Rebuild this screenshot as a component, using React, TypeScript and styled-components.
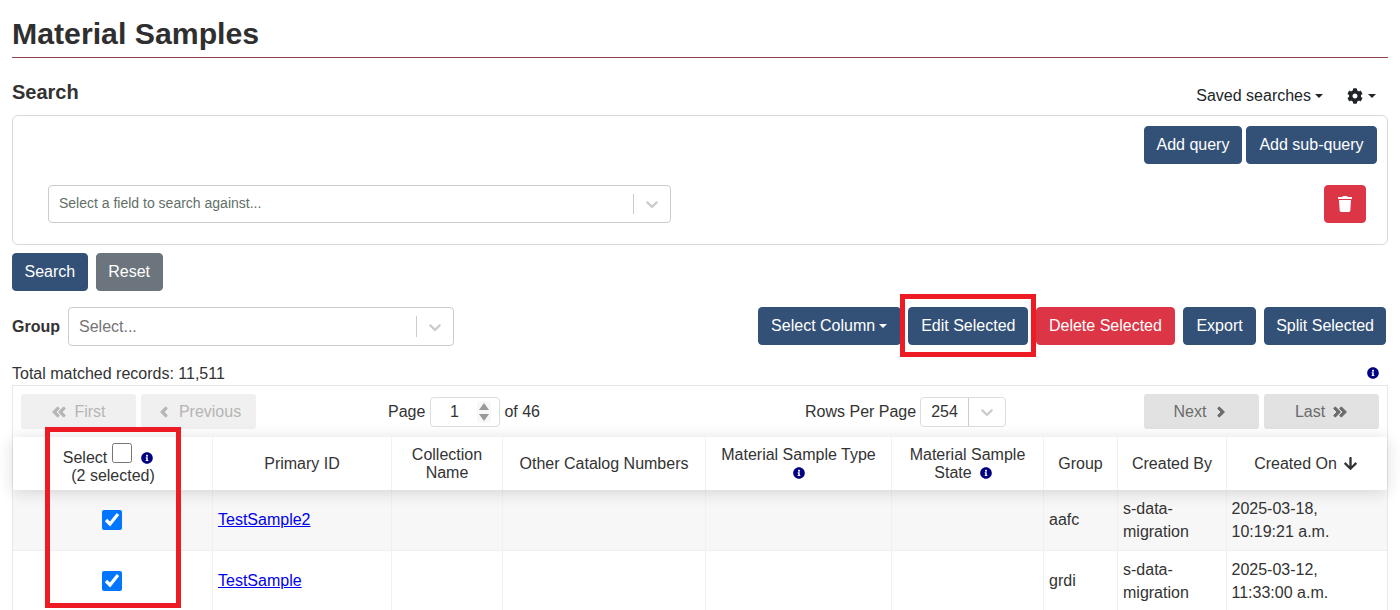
import React from "react";

import styled, { createGlobalStyle } from "styled-components";
import {
  FaAngleDoubleLeft,
  FaAngleDoubleRight,
  FaAngleLeft,
  FaAngleRight,
  FaArrowDown,
  FaCog,
  FaInfoCircle,
  FaTrash,
} from "react-icons/fa";

const COLUMNS = "200px 179px 111px 203px 186px 152px 74px 109px 160px";

const GlobalStyle = createGlobalStyle`
  html, body {
    margin: 0;
    height: 610px;
    overflow: hidden;
    background: #fff;
  }
  body {
    font-family: "Liberation Sans", Arial, sans-serif;
    font-size: 16px;
    color: #333;
  }
`;

const Page = styled.div`
  position: relative;
  height: 610px;
  padding: 0 12px;
  box-sizing: border-box;
  overflow: hidden;
`;

const Title = styled.h1`
  margin: 0;
  padding: 16px 0 5px;
  font-size: 30.25px;
  line-height: 36px;
  font-weight: 700;
  color: #2f2f2f;
  border-bottom: 1px solid #8e4450;
`;

const SearchHead = styled.div`
  display: flex;
  justify-content: space-between;
  height: 35px;
  margin-top: 22px;
`;

const SearchTitle = styled.h2`
  margin: 0;
  font-size: 20px;
  line-height: 24px;
  font-weight: 700;
`;

const HeadMenus = styled.div`
  display: flex;
  align-items: center;
  height: 32px;
  padding-right: 12px;
  color: #212529;
`;

const MenuItem = styled.span<{ $gap?: number }>`
  display: inline-flex;
  align-items: center;
  margin-left: ${(p) => p.$gap ?? 0}px;
`;

const Caret = styled.span<{ $left?: number }>`
  display: inline-block;
  margin-left: ${(p) => p.$left ?? 4}px;
  border-top: 4.8px solid currentColor;
  border-left: 4.8px solid transparent;
  border-right: 4.8px solid transparent;
`;

const SearchPanel = styled.div`
  box-sizing: border-box;
  height: 130px;
  padding: 10px 10px 0 35px;
  border: 1px solid #d8d8d8;
  border-radius: 6px;
`;

const PanelActions = styled.div`
  display: flex;
  justify-content: flex-end;
  gap: 4px;
`;

const QueryRow = styled.div`
  display: flex;
  justify-content: space-between;
  margin-top: 21px;
  padding-right: 11px;
`;

const Button = styled.button<{
  $variant?: "primary" | "danger" | "secondary";
  $pad?: number;
}>`
  box-sizing: border-box;
  height: 38px;
  padding: 0 ${(p) => p.$pad ?? 12}px;
  border: 1px solid
    ${(p) =>
      p.$variant === "danger"
        ? "#dc3545"
        : p.$variant === "secondary"
          ? "#6c757d"
          : "#335177"};
  border-radius: 4px;
  background: ${(p) =>
    p.$variant === "danger"
      ? "#dc3545"
      : p.$variant === "secondary"
        ? "#6c757d"
        : "#335177"};
  color: #fff;
  font: 16px/24px "Liberation Sans", Arial, sans-serif;
  display: inline-flex;
  align-items: center;
  white-space: nowrap;
`;

const SpacedButton = styled(Button)`
  margin-left: 1px;
`;

const TrashButton = styled(Button)`
  width: 42px;
  justify-content: center;
  padding: 0;
  font-size: 16px;
`;

const SelectBox = styled.div<{ $width: number; $height: number }>`
  box-sizing: border-box;
  display: flex;
  align-items: center;
  width: ${(p) => p.$width}px;
  height: ${(p) => p.$height}px;
  border: 1px solid #ccc;
  border-radius: 4px;
  background: #fff;
`;

const SelectText = styled.span<{ $size: number; $color: string; $lift?: number }>`
  flex: 1;
  padding: 0 0 ${(p) => p.$lift ?? 0}px 10px;
  font-size: ${(p) => p.$size}px;
  color: ${(p) => p.$color};
`;

const SelectArrow = styled.span<{ $inset: number }>`
  display: flex;
  align-items: center;
  align-self: stretch;
  margin: ${(p) => p.$inset}px 0;
  padding: 0 8px;
  border-left: 1px solid #ccc;
  color: #ccc;
`;

const SearchActions = styled.div`
  display: flex;
  gap: 8px;
  margin-top: 8px;
`;

const ToolRow = styled.div`
  display: flex;
  margin-top: 16px;
  height: 39px;
`;

const GroupLabel = styled.label`
  align-self: center;
  width: 56px;
  font-weight: 700;
`;

const ToolButtons = styled.div`
  display: flex;
  gap: 7.5px;
  margin-left: auto;
  padding-right: 2px;
`;

const TotalRow = styled.div`
  display: flex;
  justify-content: space-between;
  align-items: center;
  box-sizing: border-box;
  height: 24px;
  margin-top: 15px;
  padding-right: 9px;
  color: #333;
`;

const TotalText = styled.span`
  padding-top: 2px;
`;

const InfoIcon = styled(FaInfoCircle)`
  color: #000080;
  font-size: 12px;
  flex: none;
`;

const TableBox = styled.div`
  border: 1px solid #e8e8e8;
`;

const Pagination = styled.div`
  display: grid;
  grid-template-columns: 367px 417px 339px 235px;
  align-items: center;
  padding: 8px 0 8px 8px;
`;

const PagerGroup = styled.div`
  display: flex;
  gap: 5px;
`;

const PagerButton = styled.div<{ $dim?: boolean }>`
  display: flex;
  align-items: center;
  justify-content: center;
  gap: 7px;
  width: 115px;
  height: 35px;
  border-radius: 3px;
  background: ${(p) => (p.$dim ? "#f0f0f0" : "#e2e2e2")};
  color: ${(p) => (p.$dim ? "#b5b5b5" : "#6b6b6b")};
  svg {
    font-size: 16px;
    stroke-width: 30px;
  }
`;

const PagerCentre = styled.div`
  display: flex;
  align-items: center;
  gap: 5px;
  color: #333;
`;

const PageField = styled.div`
  box-sizing: border-box;
  display: flex;
  align-items: center;
  width: 70px;
  height: 30px;
  margin-right: -1px;
  border: 1px solid #ddd;
  border-radius: 4px;
`;

const PageInput = styled.input`
  flex: 1;
  min-width: 0;
  padding: 0;
  border: 0;
  outline: 0;
  background: transparent;
  font: 16px "Liberation Sans", Arial, sans-serif;
  color: #333;
  text-align: center;
`;

const Spinner = styled.span`
  display: flex;
  flex-direction: column;
  align-items: center;
  justify-content: center;
  gap: 4px;
  width: 14px;
  height: 22px;
  margin-right: 8px;
  background: #f8f8f8;
`;

const SpinArrow = styled.span<{ $down?: boolean }>`
  border-left: 5px solid transparent;
  border-right: 5px solid transparent;
  ${(p) => (p.$down ? "border-top" : "border-bottom")}: 7px solid #999;
`;

const RowSelect = styled(SelectBox)`
  margin-left: -1px;
  border-color: #ddd;
`;

const HeaderRow = styled.div`
  position: relative;
  z-index: 1;
  display: grid;
  grid-template-columns: ${COLUMNS};
  height: 53px;
  background: #fff;
  box-shadow: 0 2px 15px rgba(0, 0, 0, 0.15);
`;

const HeadCell = styled.div`
  box-sizing: border-box;
  display: flex;
  flex-direction: column;
  align-items: center;
  justify-content: center;
  padding: 0 5px;
  border-right: 1px solid #f0f0f0;
  text-align: center;
  line-height: 18px;
  color: #333;
  &:last-child {
    border-right: 0;
  }
`;

const HeadLine = styled.span<{ $gap?: number; $shift?: number }>`
  display: inline-flex;
  align-items: center;
  justify-content: center;
  height: 18px;
  gap: ${(p) => p.$gap ?? 8}px;
  padding-right: ${(p) => p.$shift ?? 0}px;
`;

const SelectHead = styled(HeadCell)`
  justify-content: flex-start;
  padding: 6px 0 0 1px;
`;

const SelectTop = styled.span`
  display: inline-flex;
  align-items: flex-end;
  margin-right: 10px;
`;

const SelectInfo = styled(InfoIcon)`
  margin: 0 0 2.5px 9px;
`;

const TickBox = styled.input`
  width: 20px;
  height: 20px;
  margin: 0;
  flex: none;
`;

const HeadTick = styled(TickBox)`
  margin: 0 0 3.5px 5px;
`;

const DataRow = styled.div<{ $odd?: boolean }>`
  display: grid;
  grid-template-columns: ${COLUMNS};
  height: 61px;
  box-sizing: border-box;
  background: ${(p) => (p.$odd ? "#f7f7f7" : "#fff")};
  border-bottom: 1px solid #f0f0f0;
`;

const Cell = styled.div<{ $lift?: boolean }>`
  box-sizing: border-box;
  display: flex;
  align-items: center;
  padding: 0 5px ${(p) => (p.$lift ? 2 : 0)}px 5px;
  border-right: 1px solid #f0f0f0;
  line-height: 23px;
  color: #333;
  &:last-child {
    border-right: 0;
    padding-left: 4.5px;
  }
`;

const TickCell = styled(Cell)`
  justify-content: center;
  padding: 0 1px 0 0;
`;

const SampleLink = styled.a`
  color: #0000ee;
  text-decoration: underline;
`;

const Callout = styled.div`
  position: absolute;
  box-sizing: border-box;
  border: 5px solid #ed1c24;
  pointer-events: none;
  z-index: 2;
`;

const EditCallout = styled(Callout)`
  left: 900px;
  top: 294px;
  width: 136px;
  height: 63px;
`;

const SelectCallout = styled(Callout)`
  left: 45px;
  top: 427px;
  width: 136px;
  height: 181px;
`;

const DropdownIcon: React.FC = () => (
  <svg width="20" height="20" viewBox="0 0 20 20" fill="currentColor">
    <path d="M4.516 7.548c0.436-0.446 1.043-0.481 1.576 0l3.908 3.747 3.908-3.747c0.533-0.481 1.141-0.446 1.574 0 0.436 0.445 0.408 1.197 0 1.615-0.406 0.418-4.695 4.502-4.695 4.502-0.217 0.223-0.502 0.335-0.787 0.335s-0.57-0.112-0.789-0.335c0 0-4.287-4.084-4.695-4.502s-0.436-1.17 0-1.615z" />
  </svg>
);

const rows = [
  {
    id: "TestSample2",
    group: "aafc",
    createdOn: "2025-03-18, 10:19:21 a.m.",
  },
  {
    id: "TestSample",
    group: "grdi",
    createdOn: "2025-03-12, 11:33:00 a.m.",
  },
];

const App: React.FC = () => {
  return (
    <Page>
      <GlobalStyle />
      <Title>Material Samples</Title>
      <SearchHead>
        <SearchTitle>Search</SearchTitle>
        <HeadMenus>
          <MenuItem>
            Saved searches
            <Caret />
          </MenuItem>
          <MenuItem $gap={24}>
            <FaCog size={16} />
            <Caret $left={5} />
          </MenuItem>
        </HeadMenus>
      </SearchHead>
      <SearchPanel>
        <PanelActions>
          <Button $pad={11.5}>Add query</Button>
          <Button $pad={12.5}>Add sub-query</Button>
        </PanelActions>
        <QueryRow>
          <SelectBox $width={623} $height={38}>
            <SelectText $size={14} $color="#5f6f68" $lift={2}>
              Select a field to search against...
            </SelectText>
            <SelectArrow $inset={8}>
              <DropdownIcon />
            </SelectArrow>
          </SelectBox>
          <TrashButton $variant="danger">
            <FaTrash />
          </TrashButton>
        </QueryRow>
      </SearchPanel>
      <SearchActions>
        <Button $pad={11.5}>Search</Button>
        <Button $variant="secondary" $pad={11.5}>
          Reset
        </Button>
      </SearchActions>
      <ToolRow>
        <GroupLabel>Group</GroupLabel>
        <SelectBox $width={386} $height={39}>
          <SelectText $size={16} $color="#757575">
            Select...
          </SelectText>
          <SelectArrow $inset={8}>
            <DropdownIcon />
          </SelectArrow>
        </SelectBox>
        <ToolButtons>
          <Button $pad={12.5}>
            Select Column
            <Caret />
          </Button>
          <Button>Edit Selected</Button>
          <Button $variant="danger">Delete Selected</Button>
          <SpacedButton>Export</SpacedButton>
          <SpacedButton $pad={11}>Split Selected</SpacedButton>
        </ToolButtons>
      </ToolRow>
      <TotalRow>
        <TotalText>Total matched records: 11,511</TotalText>
        <InfoIcon />
      </TotalRow>
      <TableBox>
        <Pagination>
          <PagerGroup>
            <PagerButton $dim>
              <FaAngleDoubleLeft />
              First
            </PagerButton>
            <PagerButton $dim>
              <FaAngleLeft />
              Previous
            </PagerButton>
          </PagerGroup>
          <PagerCentre>
            Page
            <PageField>
              <PageInput type="text" defaultValue="1" />
              <Spinner>
                <SpinArrow />
                <SpinArrow $down />
              </Spinner>
            </PageField>
            of 46
          </PagerCentre>
          <PagerCentre>
            Rows Per Page
            <RowSelect $width={86} $height={30}>
              <SelectText $size={16} $color="#333">
                254
              </SelectText>
              <SelectArrow $inset={0}>
                <DropdownIcon />
              </SelectArrow>
            </RowSelect>
          </PagerCentre>
          <PagerGroup>
            <PagerButton>
              Next
              <FaAngleRight />
            </PagerButton>
            <PagerButton>
              Last
              <FaAngleDoubleRight />
            </PagerButton>
          </PagerGroup>
        </Pagination>
        <HeaderRow>
          <SelectHead>
            <SelectTop>
              Select
              <HeadTick type="checkbox" readOnly />
              <SelectInfo />
            </SelectTop>
            <span>(2 selected)</span>
          </SelectHead>
          <HeadCell>Primary ID</HeadCell>
          <HeadCell>Collection Name</HeadCell>
          <HeadCell>Other Catalog Numbers</HeadCell>
          <HeadCell>
            Material Sample Type
            <HeadLine>
              <InfoIcon />
            </HeadLine>
          </HeadCell>
          <HeadCell>
            Material Sample
            <HeadLine $shift={9}>
              State
              <InfoIcon />
            </HeadLine>
          </HeadCell>
          <HeadCell>Group</HeadCell>
          <HeadCell>Created By</HeadCell>
          <HeadCell>
            <HeadLine $gap={6} $shift={2}>
              Created On
              <FaArrowDown size={15} />
            </HeadLine>
          </HeadCell>
        </HeaderRow>
        {rows.map((row, i) => (
          <DataRow key={row.id} $odd={i === 0}>
            <TickCell>
              <TickBox type="checkbox" defaultChecked />
            </TickCell>
            <Cell $lift>
              <SampleLink href="#">{row.id}</SampleLink>
            </Cell>
            <Cell />
            <Cell />
            <Cell />
            <Cell />
            <Cell $lift>{row.group}</Cell>
            <Cell>s-data-migration</Cell>
            <Cell>{row.createdOn}</Cell>
          </DataRow>
        ))}
      </TableBox>
      <EditCallout />
      <SelectCallout />
    </Page>
  );
};

export default App;
